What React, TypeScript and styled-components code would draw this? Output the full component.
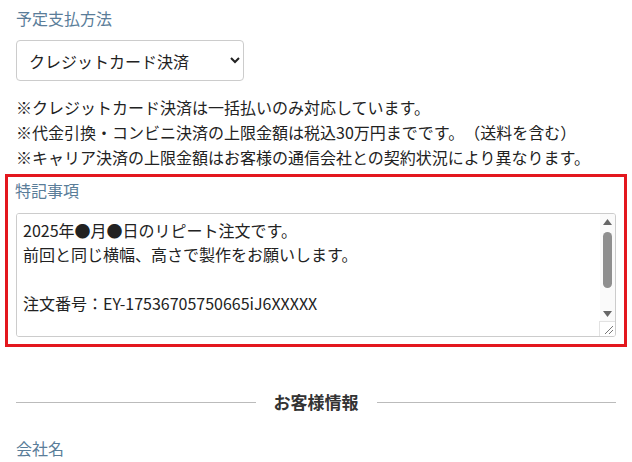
import React from "react"
import styled, { createGlobalStyle } from "styled-components"

const GlobalStyle = createGlobalStyle`
    html, body {
        margin: 0;
        padding: 0;
        background: #fff;
    }
    body {
        font-family: "Noto Sans CJK JP", "Noto Sans", sans-serif;
        color: #222;
        text-spacing-trim: space-all;
    }
`

const NOTE_TEXT =
    "2025年●月●日のリピート注文です。\n前回と同じ横幅、高さで製作をお願いします。\n\n注文番号：EY-17536705750665iJ6XXXXX\n\n\n"

export default function App() {
    return (
        <>
            <GlobalStyle />
            <Page>
                <Label>予定支払方法</Label>
                <Select defaultValue="credit">
                    <option value="credit">クレジットカード決済</option>
                    <option value="cod">代金引換</option>
                    <option value="cvs">コンビニ決済</option>
                    <option value="carrier">キャリア決済</option>
                </Select>
                <Notes>
                    <li>※クレジットカード決済は一括払いのみ対応しています。</li>
                    <li>※代金引換・コンビニ決済の上限金額は税込30万円までです。（送料を含む）</li>
                    <li>※キャリア決済の上限金額はお客様の通信会社との契約状況により異なります。</li>
                </Notes>
                <Highlight>
                    <Label $tight>特記事項</Label>
                    <TextBox>
                        <TextArea defaultValue={NOTE_TEXT} />
                        <ScrollBar aria-hidden>
                            <ArrowButton>
                                <svg width="9" height="6" viewBox="0 0 9 6">
                                    <path d="M4.5 0 L9 6 L0 6 Z" fill="#666" />
                                </svg>
                            </ArrowButton>
                            <Track>
                                <Thumb />
                            </Track>
                            <ArrowButton>
                                <svg width="9" height="6" viewBox="0 0 9 6">
                                    <path d="M0 0 L9 0 L4.5 6 Z" fill="#666" />
                                </svg>
                            </ArrowButton>
                            <Resizer>
                                <svg width="14" height="14" viewBox="0 0 14 14">
                                    <path d="M4 12 L12 4 M8 12 L12 8" stroke="#777" strokeWidth="1" />
                                </svg>
                            </Resizer>
                        </ScrollBar>
                    </TextBox>
                </Highlight>
                <Divider>
                    <span>お客様情報</span>
                </Divider>
                <Label>会社名</Label>
            </Page>
        </>
    )
}

const Page = styled.div`
    padding: 6px 16px 0;
    display: flex;
    flex-direction: column;
    align-items: flex-start;
`

const Label = styled.div<{ $tight?: boolean }>`
    font-size: 16px;
    line-height: 24px;
    color: #5a7d99;
    margin-left: ${p => (p.$tight ? "-1px" : "0")};
`

const Select = styled.select`
    margin-top: 10px;
    width: 228px;
    height: 41px;
    padding: 0 8px;
    font-family: "Noto Sans CJK JP", sans-serif;
    font-size: 16px;
    color: #222;
    background: #fff;
    border: 1px solid #ccc;
    border-radius: 4px;
`

const Notes = styled.ul`
    list-style: none;
    margin: 14px 0 0;
    padding: 0;
    font-size: 16px;
    line-height: 25px;
    color: #222;
`

const Highlight = styled.section`
    align-self: stretch;
    margin: 4px -11px 0;
    border: 3px solid #e3171e;
    padding: 1px 8px 7px;
    display: flex;
    flex-direction: column;
`

const TextBox = styled.div`
    margin-top: 11px;
    height: 124px;
    box-sizing: border-box;
    display: flex;
    border: 1px solid #ccc;
    border-radius: 3px;
    overflow: hidden;
`

const TextArea = styled.textarea`
    flex: 1;
    min-width: 0;
    margin: 0;
    padding: 4px 6px;
    border: none;
    outline: none;
    resize: none;
    overflow: hidden;
    font-family: "Noto Sans CJK JP", sans-serif;
    font-size: 16px;
    line-height: 24.4px;
    color: #222;
    background: #fff;
`

const ScrollBar = styled.div`
    width: 15px;
    flex: none;
    display: flex;
    flex-direction: column;
    background: #fafafa;
`

const ArrowButton = styled.div`
    height: 15px;
    display: flex;
    align-items: center;
    justify-content: center;
`

const Track = styled.div`
    flex: 1;
    display: flex;
    justify-content: center;
    padding-top: 3px;
`

const Thumb = styled.div`
    width: 9px;
    height: 56px;
    border-radius: 5px;
    background: #8f8f8f;
`

const Resizer = styled.div`
    height: 14px;
    display: flex;
    align-items: center;
    justify-content: center;
    background: #fff;
    border-top: 1px solid #e2e2e2;
    border-left: 1px solid #e2e2e2;
    margin-left: -1px;
`

const Divider = styled.div`
    align-self: stretch;
    margin-top: 43px;
    margin-bottom: 22px;
    display: flex;
    align-items: center;
    gap: 18px;
    font-size: 17px;
    font-weight: 700;
    color: #333;
    line-height: 24px;
    &::before,
    &::after {
        content: "";
        flex: 1;
        height: 1px;
        background: #bbb;
    }
`
